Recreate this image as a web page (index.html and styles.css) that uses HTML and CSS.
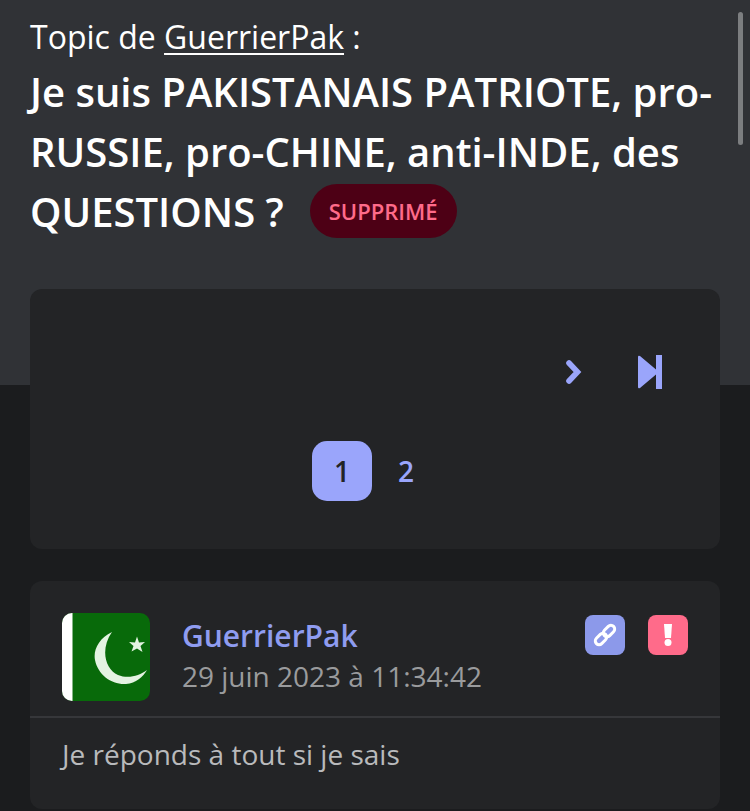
FILE: index.html
```html
<!DOCTYPE html>
<html lang="fr">
<head>
<meta charset="utf-8">
<title>Topic</title>
<link rel="stylesheet" href="styles.css">
</head>
<body>
<div class="backdrop"></div>
<div class="scrollbar"></div>
<main class="page">
  <header class="head">
    <p class="author">Topic de <a href="#">GuerrierPak</a> :</p>
    <h1 class="title"><span>Je suis PAKISTANAIS PATRIOTE, pro-RUSSIE, pro-CHINE, anti-INDE, des</span> <span>QUESTIONS ?</span><span class="badge">SUPPRIMÉ</span></h1>
  </header>
  <section class="card pager">
    <div class="arrows">
      <svg class="next" viewBox="0 0 16 24" width="16" height="24"><path d="M3 3 L11.500 12 L3 21" fill="none" stroke="#9aa5fb" stroke-width="5.600" stroke-linecap="round" stroke-linejoin="miter"/></svg>
      <svg class="last" viewBox="0 0 26 34" width="26" height="34"><path d="M1 2 Q1 0 3 1 L19 14.500 V0 H25 V34 H19 V19.500 L3 33 Q1 34 1 32 Z" fill="#9aa5fb"/></svg>
    </div>
    <div class="pages">
      <span class="page-num current">1</span>
      <span class="page-num">2</span>
    </div>
  </section>
  <article class="card post">
    <div class="post-head">
      <svg class="avatar" viewBox="0 0 88 88" width="88" height="88">
        <rect width="88" height="88" fill="#086a0a"/>
        <rect width="10.500" height="88" fill="#fff"/>
        <g class="flag-art">
          <path d="M50 19 C37 25 31 37 33 47 C36 62 50 72 64 71 C74 70 81 64 85 57 C77 63 66 66 56 62 C43 56 38 36 50 19 Z" fill="#e4f3e2"/>
          <path d="M75 23.500 L77 29.500 L83 29 L78.500 33 L80.500 39 L75 35.500 L69.500 38.500 L71.500 33 L67 29 L73 29.500 Z" fill="#e4f3e2"/>
        </g>
      </svg>
      <div class="meta">
        <a class="name" href="#">GuerrierPak</a>
        <time class="date">29 juin 2023 à 11:34:42</time>
      </div>
      <div class="actions">
        <span class="action link">
          <svg viewBox="0 0 24 24" width="24" height="24" fill="none" stroke="#fff" stroke-width="3"><rect x="12.250" y="1.500" width="7.500" height="13" rx="3.750" transform="rotate(45 16 8)"/><rect x="4.250" y="9.500" width="7.500" height="13" rx="3.750" transform="rotate(45 8 16)"/></svg>
        </span>
        <span class="action report">
          <svg viewBox="0 0 24 24" width="24" height="24" fill="#fff"><path d="M8 1 H16 L15 15 H9 Z"/><circle cx="12" cy="19.500" r="3.500"/></svg>
        </span>
      </div>
    </div>
    <p class="body">Je réponds à tout si je sais</p>
  </article>
</main>
</body>
</html>
```
FILE: styles.css
```css
* { box-sizing: border-box; }
html, body { margin: 0; padding: 0; height: 811px; overflow: hidden; }
body {
  background: #1b1c1e;
  font-family: "Open Sans", "Noto Sans", sans-serif;
  position: relative;
}
.backdrop {
  position: absolute;
  left: 0; top: 0; right: 0;
  height: 385px;
  background: #303236;
}
.scrollbar {
  position: absolute;
  left: 738px; top: 12px;
  width: 5px; height: 133px;
  border-radius: 3px;
  background: #7c7e80;
}
.page {
  position: relative;
  padding: 15px 30px 0;
  display: flex;
  flex-direction: column;
}
.head { height: 274px; }
.author {
  margin: 0;
  color: #fff;
  font-size: 32px;
  line-height: 44px;
}
.author a { color: #fff; text-decoration: underline; text-decoration-thickness: 2px; text-underline-offset: 4px; }
.title {
  margin: 3px 0 0;
  color: #fff;
  font-size: 40px;
  font-weight: 600;
  line-height: 60px;
}
.badge {
  display: inline-block;
  margin-left: 26px;
  padding: 0 19px;
  height: 54px;
  border-radius: 27px;
  background: #4d0015;
  color: #ff6b8a;
  font-size: 22px;
  font-weight: 600;
  line-height: 54px;
  vertical-align: top;
  margin-top: 2px;
}
.card {
  background: #232426;
  border-radius: 12px;
}
.pager {
  height: 260px;
  display: flex;
  flex-direction: column;
}
.arrows {
  height: 152px;
  padding: 0 57px 0 0;
  display: flex;
  justify-content: flex-end;
  align-items: flex-start;
  gap: 55px;
}
.next { margin-top: 71px; }
.last { margin-top: 66px; }
.pages {
  display: flex;
  justify-content: center;
  gap: 4px;
  margin-left: -2px;
}
.page-num {
  width: 60px; height: 60px;
  border-radius: 15px;
  color: #9aa5fb;
  font-size: 28px;
  font-weight: 600;
  display: flex;
  align-items: center;
  justify-content: center;
}
.page-num.current { background: #9aa5fb; color: #232426; }
.post { margin-top: 32px; height: 228px; }
.post-head {
  height: 137px;
  padding: 32px 32px 0;
  border-bottom: 2px solid #36373a;
  display: flex;
  align-items: flex-start;
}
.avatar { border-radius: 10px; flex: none; }
.flag-art { filter: blur(0.5px); }
.meta {
  margin-left: 32px;
  display: flex;
  flex-direction: column;
  flex: 1;
}
.name {
  color: #8f9cf0;
  font-size: 30px;
  font-weight: 600;
  line-height: 40px;
  text-decoration: none;
  margin-top: 3px;
}
.date {
  color: #9a9b9d;
  font-size: 28px;
  line-height: 40px;
}
.actions { display: flex; gap: 23px; margin-top: 2px; }
.action {
  width: 40px; height: 40px;
  border-radius: 8px;
  display: flex;
  align-items: center;
  justify-content: center;
}
.link { background: #8c99ea; }
.report { background: #ff6b8a; }
.body {
  margin: 0;
  padding: 16px 31px 16px 32px;
  color: #b9babc;
  font-size: 28px;
  line-height: 40px;
}
```
